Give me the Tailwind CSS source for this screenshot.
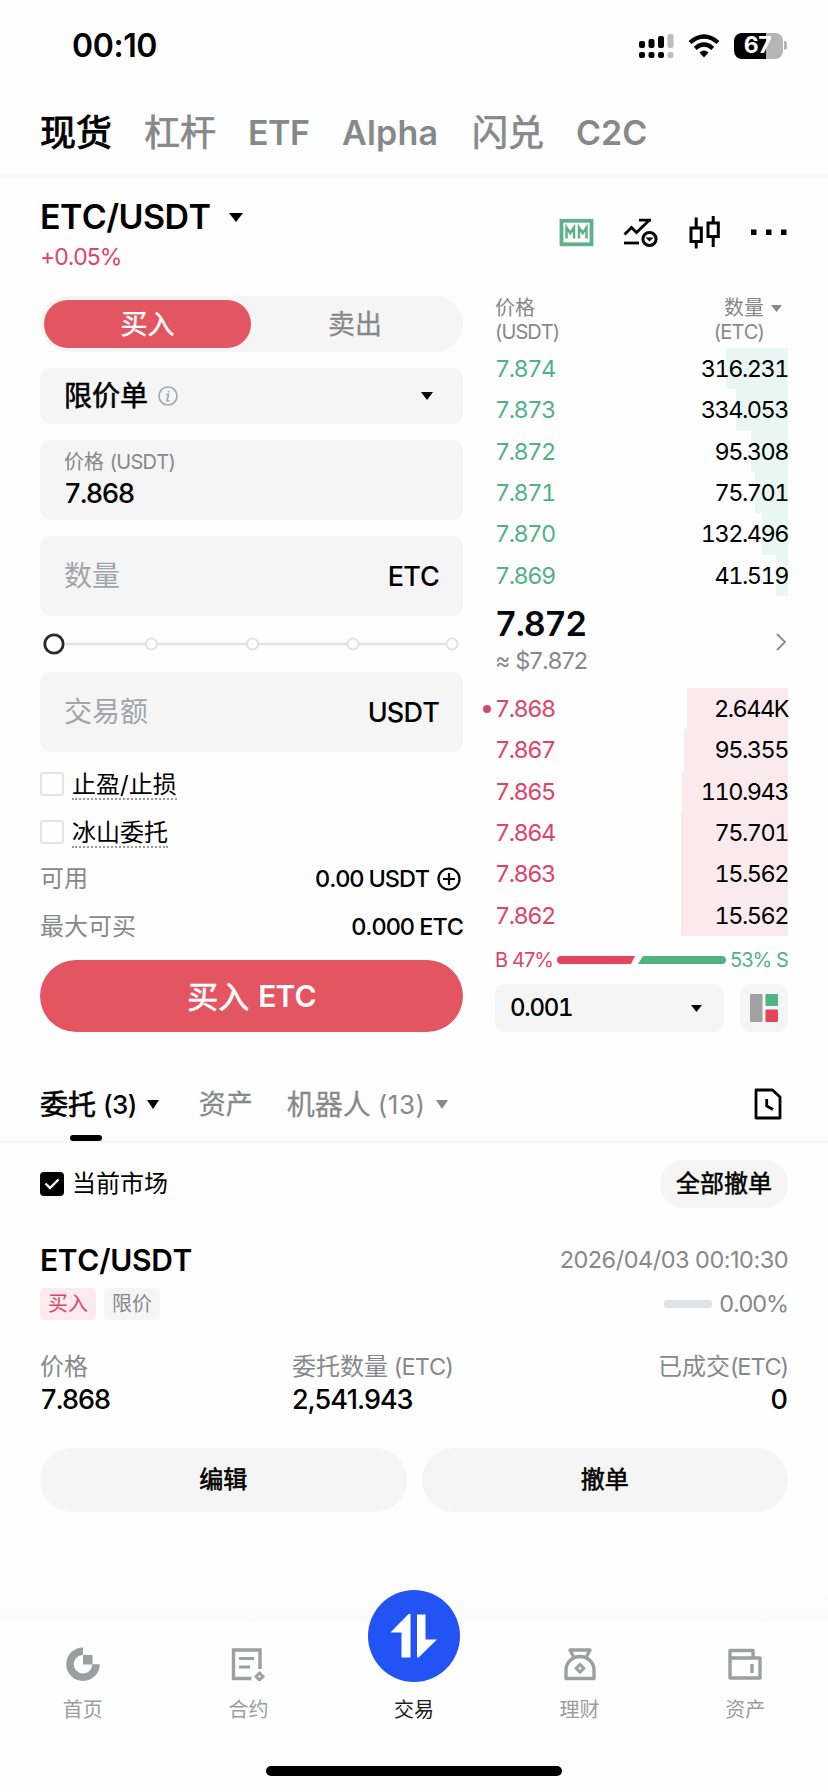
<!DOCTYPE html>
<html lang="zh-CN">
<head>
<meta charset="utf-8">
<title>ETC/USDT 现货交易</title>
<script src="https://cdn.jsdelivr.net/npm/@tailwindcss/browser@4"></script>
</head>
<body class="bg-white">
<div class="flex h-[1792px] w-[828px] flex-col overflow-hidden bg-[#fefefe] font-['Inter','Noto_Sans_CJK_SC',sans-serif] leading-none text-black [font-kerning:none]">

  <!-- status bar -->
  <div class="flex h-[90px] items-center justify-between pt-[1px] pr-[41px] pl-[72px]">
    <span class="text-[32px] font-semibold tracking-[-0.4px]">00:10</span>
    <div class="flex items-center gap-[14px]">
      <svg class="h-[26px] w-[35px]" viewBox="0 0 35 26">
        <g fill="#000"><rect x="0" y="8" width="6" height="7" rx="2"/><rect x="9.5" y="6" width="6" height="9" rx="2"/><rect x="19" y="3" width="6" height="12" rx="2"/><rect x="0" y="19" width="6" height="6" rx="2"/><rect x="9.5" y="19" width="6" height="6" rx="2"/><rect x="19" y="19" width="6" height="6" rx="2"/></g>
        <g fill="#bdbdbd"><rect x="28.500" y="1" width="6" height="14" rx="2"/><rect x="28.500" y="19" width="6" height="6" rx="2"/></g>
      </svg>
      <svg class="h-[24px] w-[32px]" viewBox="0 0 32 24" fill="none" stroke="#000" stroke-width="4.200">
        <path d="M2 8.500Q16 -3.500 30 8.500"/><path d="M7.200 14.300Q16 6.700 24.800 14.300"/>
        <path d="M11.500 18.500Q16 14.700 20.500 18.500L16 23.500Z" fill="#000" stroke="none"/>
      </svg>
      <div class="flex items-center gap-[1px]">
        <div class="flex h-[26px] w-[49px] items-center justify-center rounded-[8px] bg-[linear-gradient(90deg,#000_66%,#b5b5b5_66%)] pr-[2px] text-[23px] font-bold tracking-[-0.5px] text-white">67</div>
        <div class="h-[9px] w-[3px] rounded-r-full bg-[#b5b5b5]"></div>
      </div>
    </div>
  </div>

  <!-- market tabs -->
  <div class="flex h-[87px] items-center gap-[32px] border-b-2 border-[#f7f8f8] pl-[40px] text-[36px] text-[#86898a]">
    <span class="[-webkit-text-stroke:0.9px_#000] text-black">现货</span>
    <span class="[-webkit-text-stroke:0.7px_#86898a]">杠杆</span>
    <span class="w-[62px] text-[34px] font-semibold tracking-[-0.5px]">ETF</span>
    <span class="w-[98px] text-[34px] font-semibold tracking-[0.2px]">Alpha</span>
    <span class="[-webkit-text-stroke:0.7px_#86898a]">闪兑</span>
    <span class="text-[34px] font-semibold">C2C</span>
  </div>

  <!-- pair header -->
  <div class="flex h-[119px] items-start justify-between pr-[39px] pl-[40px]">
    <div class="flex flex-col pt-[23px]">
      <div class="flex items-center gap-[20px]">
        <span class="w-[169px] text-[34px] leading-[34px] font-semibold tracking-[-0.6px] whitespace-nowrap">ETC/USDT</span>
        <svg class="h-[9px] w-[14px]" viewBox="0 0 14 9"><path d="M0 0H14L7 9Z"/></svg>
      </div>
      <span class="mt-[11px] text-[23px] leading-[24px] tracking-[-1px] text-[#dc4468]">+0.05%</span>
    </div>
    <div class="flex items-center pt-[37px]">
      <svg class="h-[36px] w-[36px]" viewBox="0 0 36 36" fill="none" stroke="#5fb18c"><rect x="2.500" y="6.800" width="30" height="23.500" stroke-width="3.800"/><path d="M7.500 24.500V13.500L11.200 19L15 13.500V24.500M20 24.500V13.500L23.700 19L27.500 13.500V24.500" stroke-width="2.500"/></svg>
      <svg class="ml-[28px] h-[36px] w-[36px]" viewBox="0 0 36 36" fill="none" stroke="#000" stroke-width="2.800"><path d="M1.500 20.500L8.500 13.500L13.500 18.500L26 6.500M16 6.200H28"/><path d="M1 29H16"/><circle cx="26.500" cy="25" r="6.600" stroke-width="3"/><path d="M22.500 23.500H30.500L26.500 27.500Z" fill="#000" stroke="none"/></svg>
      <svg class="ml-[28px] h-[36px] w-[36px]" viewBox="0 0 36 36" fill="none" stroke="#000" stroke-width="3"><rect x="4" y="14" width="10.300" height="13.500"/><rect x="21" y="9" width="10.300" height="13.500"/><path d="M9.200 3.500V13M9.200 28V34.500M26.200 2V8M26.200 23V33"/></svg>
      <svg class="ml-[28px] h-[36px] w-[38px]" viewBox="0 0 38 36"><rect x="0" y="15.500" width="5.500" height="5.500"/><rect x="15" y="15.500" width="5.500" height="5.500"/><rect x="30" y="15.500" width="5.500" height="5.500"/></svg>
    </div>
  </div>

  <!-- trading area -->
  <div class="flex h-[736px] pr-[40px] pl-[40px]">
    <!-- order form -->
    <div class="flex w-[423px] flex-col">
      <div class="flex h-[56px] items-center rounded-full bg-[#f5f5f5] p-[4px] text-[27px]">
        <div class="flex h-[48px] w-[207px] items-center justify-center rounded-full bg-[#e35561] text-white [-webkit-text-stroke:0.4px_#fff]">买入</div>
        <div class="flex flex-1 items-center justify-center text-[#86898a] [-webkit-text-stroke:0.3px_#86898a]">卖出</div>
      </div>
      <div class="mt-[16px] flex h-[56px] items-center rounded-[10px] bg-[#f5f5f5] pr-[30px] pl-[24px]">
        <span class="text-[28px] [-webkit-text-stroke:0.6px_#000]">限价单</span>
        <svg class="ml-[10px] h-[20px] w-[20px]" viewBox="0 0 20 20" fill="none" stroke="#a2a5a8" stroke-width="1.600"><circle cx="10" cy="10" r="9"/><path d="M8.300 8.500H10.500L9 14.700H11.300M10.600 4.700V6.600"/></svg>
        <svg class="ml-auto h-[8px] w-[12px]" viewBox="0 0 12 8"><path d="M0 0H12L6 8Z"/></svg>
      </div>
      <div class="mt-[16px] flex h-[80px] flex-col rounded-[10px] bg-[#f5f5f5] pt-[12px] pl-[24px]">
        <span class="text-[20px] leading-[20px] text-[#86898a]">价格 <span class="tracking-[-0.7px]">(USDT)</span></span>
        <span class="mt-[8px] text-[27px] leading-[28px] font-medium tracking-[-1.5px] tabular-nums">7.868</span>
      </div>
      <div class="mt-[16px] flex h-[80px] items-center justify-between rounded-[10px] bg-[#f5f5f5] px-[24px]">
        <span class="text-[28px] text-[#a2a5a8]">数量</span>
        <span class="text-[27px] font-medium tracking-[-0.8px]">ETC</span>
      </div>
      <svg class="h-[56px] w-[423px]" viewBox="0 0 423 56" fill="none"><path d="M26 28H412" stroke="#e2e2e2" stroke-width="2.500"/><circle cx="14" cy="28" r="9.200" stroke="#2b2b2b" stroke-width="2.800" fill="#fefefe"/><g stroke="#e0e0e0" stroke-width="1.800" fill="#fefefe"><circle cx="111.500" cy="28" r="5.600"/><circle cx="212.500" cy="28" r="5.600"/><circle cx="313" cy="28" r="5.600"/><circle cx="412" cy="28" r="5.600"/></g></svg>
      <div class="flex h-[80px] items-center justify-between rounded-[10px] bg-[#f5f5f5] px-[24px]">
        <span class="text-[28px] text-[#a2a5a8]">交易额</span>
        <span class="text-[27px] font-medium tracking-[-0.8px]">USDT</span>
      </div>
      <div class="mt-[20px] flex h-[28px] items-start gap-[8px]">
        <div class="h-[24px] w-[24px] rounded-[3px] border-2 border-[#e4e4e4]"></div>
        <span class="border-b-2 border-dotted border-[#9a9a9a] text-[24px] leading-[26px]">止盈/止损</span>
      </div>
      <div class="mt-[20px] flex h-[28px] items-start gap-[8px]">
        <div class="h-[24px] w-[24px] rounded-[3px] border-2 border-[#e4e4e4]"></div>
        <span class="border-b-2 border-dotted border-[#9a9a9a] text-[24px] leading-[26px]">冰山委托</span>
      </div>
      <div class="mt-[19px] flex h-[24px] items-center">
        <span class="text-[24px] text-[#86898a]">可用</span>
        <span class="ml-auto text-[23.500px] font-medium tracking-[-1.1px]">0.00 USDT</span>
        <svg class="mr-[2px] ml-[8px] h-[24px] w-[24px]" viewBox="0 0 24 24" fill="none" stroke="#000" stroke-width="2.200"><circle cx="12" cy="12" r="10.500"/><path d="M6 12H18M12 6V18"/></svg>
      </div>
      <div class="mt-[24px] flex h-[24px] items-center justify-between">
        <span class="text-[24px] text-[#86898a]">最大可买</span>
        <span class="text-[23.500px] font-medium tracking-[-1px]">0.000 ETC</span>
      </div>
      <div class="mt-[21px] flex h-[72px] items-center justify-center gap-[9px] rounded-full bg-[#e35561] text-white">
        <span class="text-[31px] [-webkit-text-stroke:0.6px_#fff]">买入</span>
        <span class="text-[30px] font-semibold tracking-[-0.8px]">ETC</span>
      </div>
    </div>

    <!-- order book -->
    <div class="ml-[32px] flex w-[293px] flex-col">
      <div class="flex h-[52px] justify-between text-[20px] leading-[24px] text-[#86898a]">
        <div class="flex flex-col"><span>价格</span><span class="tracking-[-0.9px]">(USDT)</span></div>
        <div class="flex gap-[7px] pr-[6px]">
          <div class="flex flex-col items-end"><span>数量</span><span class="tracking-[-0.8px]">(ETC)</span></div>
          <svg class="mt-[9px] h-[7px] w-[11px]" viewBox="0 0 11 7"><path d="M0 0H11L5.500 7Z" fill="#86898a"/></svg>
        </div>
      </div>
      <div class="grid h-[248px] grid-rows-[41px_42px_41px_41px_42px_41px] text-[23.500px] tracking-[-1.5px] tabular-nums">
        <div class="flex items-center justify-between bg-[linear-gradient(#e8f7f1,#e8f7f1)] bg-right bg-no-repeat" style="background-size:62px 100%"><span class="text-[#52b188]">7.874</span><span>316.231</span></div>
        <div class="flex items-center justify-between bg-[linear-gradient(#e8f7f1,#e8f7f1)] bg-right bg-no-repeat" style="background-size:52px 100%"><span class="text-[#52b188]">7.873</span><span>334.053</span></div>
        <div class="flex items-center justify-between bg-[linear-gradient(#e8f7f1,#e8f7f1)] bg-right bg-no-repeat" style="background-size:37px 100%"><span class="text-[#52b188]">7.872</span><span>95.308</span></div>
        <div class="flex items-center justify-between bg-[linear-gradient(#e8f7f1,#e8f7f1)] bg-right bg-no-repeat" style="background-size:33px 100%"><span class="text-[#52b188]">7.871</span><span>75.701</span></div>
        <div class="flex items-center justify-between bg-[linear-gradient(#e8f7f1,#e8f7f1)] bg-right bg-no-repeat" style="background-size:26px 100%"><span class="text-[#52b188]">7.870</span><span>132.496</span></div>
        <div class="flex items-center justify-between bg-[linear-gradient(#e8f7f1,#e8f7f1)] bg-right bg-no-repeat" style="background-size:12px 100%"><span class="text-[#52b188]">7.869</span><span>41.519</span></div>
      </div>
      <div class="flex h-[92px] items-center justify-between pr-[2px]">
        <div class="-mt-[4px] flex flex-col">
          <span class="text-[34px] leading-[36px] font-semibold tracking-[-1.2px] text-[#06060f] tabular-nums">7.872</span>
          <span class="mt-[6px] text-[23.500px] leading-[26px] tracking-[-0.9px] text-[#86898a]">≈ $7.872</span>
        </div>
        <svg class="h-[18px] w-[10px]" viewBox="0 0 10 18" fill="none" stroke="#86898a" stroke-width="1.800"><path d="M1 1L9 9L1 17"/></svg>
      </div>
      <div class="grid h-[248px] grid-rows-[41px_42px_41px_41px_42px_41px] text-[23.500px] tracking-[-1.5px] tabular-nums">
        <div class="relative flex items-center justify-between bg-[linear-gradient(#faeaed,#faeaed)] bg-right bg-no-repeat" style="background-size:101px 100%"><i class="absolute left-[-12px] h-[8px] w-[8px] rounded-full bg-[#dc4468]"></i><span class="text-[#dc4468]">7.868</span><span>2.644K</span></div>
        <div class="flex items-center justify-between bg-[linear-gradient(#faeaed,#faeaed)] bg-right bg-no-repeat" style="background-size:104px 100%"><span class="text-[#dc4468]">7.867</span><span>95.355</span></div>
        <div class="flex items-center justify-between bg-[linear-gradient(#faeaed,#faeaed)] bg-right bg-no-repeat" style="background-size:106px 100%"><span class="text-[#dc4468]">7.865</span><span>110.943</span></div>
        <div class="flex items-center justify-between bg-[linear-gradient(#faeaed,#faeaed)] bg-right bg-no-repeat" style="background-size:107px 100%"><span class="text-[#dc4468]">7.864</span><span>75.701</span></div>
        <div class="flex items-center justify-between bg-[linear-gradient(#faeaed,#faeaed)] bg-right bg-no-repeat" style="background-size:107px 100%"><span class="text-[#dc4468]">7.863</span><span>15.562</span></div>
        <div class="flex items-center justify-between bg-[linear-gradient(#faeaed,#faeaed)] bg-right bg-no-repeat" style="background-size:107px 100%"><span class="text-[#dc4468]">7.862</span><span>15.562</span></div>
      </div>
      <div class="flex h-[48px] items-center justify-between text-[20px] tracking-[-0.9px]">
        <span class="text-[#dc4468]">B 47%</span>
        <svg class="h-[8px] w-[169px]" viewBox="0 0 169 8"><path d="M4 0H78L74 8H4A4 4 0 0 1 4 0Z" fill="#e2455c"/><path d="M86 0H165A4 4 0 0 1 165 8H81Z" fill="#52b382"/></svg>
        <span class="text-[#52b188]">53% S</span>
      </div>
      <div class="flex h-[48px] gap-[16px]">
        <div class="flex w-[229px] items-center justify-between rounded-[10px] bg-[#f5f5f5] pr-[22px] pl-[15px]">
          <span class="text-[24px] font-medium tracking-[-1.3px] tabular-nums">0.001</span>
          <svg class="h-[7px] w-[11px]" viewBox="0 0 11 7"><path d="M0 0H11L5.500 7Z"/></svg>
        </div>
        <div class="flex w-[48px] items-center justify-center rounded-[10px] bg-[#f5f5f5]">
          <svg class="h-[28px] w-[28px]" viewBox="0 0 28 28"><rect width="12.500" height="28" rx="1" fill="#9fa1a2"/><rect x="15.500" width="12.500" height="12" rx="1" fill="#52b382"/><rect x="15.500" y="15.500" width="12.500" height="12.500" rx="1" fill="#e2455c"/></svg>
        </div>
      </div>
    </div>
  </div>

  <!-- order tabs -->
  <div class="mt-[33px] flex h-[78px] border-b-2 border-[#f6f6f6] pr-[40px] pl-[40px] text-[#86898a]">
    <div class="flex flex-col">
      <div class="flex h-[70px] items-center pt-[9px]">
        <span class="text-[28px] text-black [-webkit-text-stroke:0.6px_#000]">委托</span>
        <span class="ml-[7px] text-[26px] font-medium tracking-[-0.6px] text-black">(3)</span>
        <svg class="ml-[10px] h-[9px] w-[12px]" viewBox="0 0 12 9"><path d="M0 0H12L6 9Z"/></svg>
      </div>
      <div class="ml-[30px] h-[6px] w-[32px] rounded-full bg-black"></div>
    </div>
    <div class="ml-[40px] flex h-[70px] items-center pt-[9px] text-[27px]">
      <span class="[-webkit-text-stroke:0.3px_#86898a]">资产</span>
      <span class="ml-[34px] text-[28px] [-webkit-text-stroke:0.3px_#86898a]">机器人</span>
      <span class="ml-[7px] text-[26px] tracking-[0.6px]">(13)</span>
      <svg class="ml-[10px] h-[9px] w-[12px]" viewBox="0 0 12 9"><path d="M0 0H12L6 9Z" fill="#86898a"/></svg>
    </div>
    <svg class="mt-[23px] mr-[6px] ml-auto h-[32px] w-[28px]" viewBox="0 0 28 32" fill="none" stroke="#000" stroke-width="2.800"><path d="M2 2H18.500L26 9V30H2Z" stroke-linejoin="round"/><path d="M12.700 11V18L19 21.500"/></svg>
  </div>

  <!-- filter row -->
  <div class="mt-[17px] flex h-[48px] items-center px-[40px]">
    <div class="flex h-[24px] w-[24px] items-center justify-center rounded-[4px] bg-black">
      <svg class="h-[24px] w-[24px]" viewBox="0 0 24 24" fill="none" stroke="#fff" stroke-width="2.400"><path d="M5.500 11.500L10 16L18.500 7.500"/></svg>
    </div>
    <span class="ml-[8px] text-[24px]">当前市场</span>
    <div class="ml-auto flex h-[48px] w-[128px] items-center justify-center rounded-full bg-[#f5f5f5] text-[24px] [-webkit-text-stroke:0.5px_#000]">全部撤单</div>
  </div>

  <!-- order card -->
  <div class="flex flex-col px-[40px] pt-[36px]">
    <div class="flex h-[32px] items-center justify-between">
      <span class="text-[30px] font-semibold tracking-[-0.3px]">ETC/USDT</span>
      <span class="text-[23.500px] tracking-[-0.5px] text-[#86898a]">2026/04/03 00:10:30</span>
    </div>
    <div class="mt-[12px] flex h-[32px] items-center text-[20px]">
      <span class="flex h-[32px] w-[56px] items-center justify-center rounded-[4px] bg-[#fcebee] text-[#dc4468]">买入</span>
      <span class="ml-[8px] flex h-[32px] w-[56px] items-center justify-center rounded-[4px] bg-[#f5f5f5] text-[#86898a]">限价</span>
      <i class="ml-auto h-[8px] w-[48px] rounded-[3px] bg-[#e1e3e4]"></i>
      <span class="ml-[7px] text-[23.500px] tracking-[-1.1px] text-[#86898a]">0.00%</span>
    </div>
    <div class="mt-[34px] grid grid-cols-[252px_300px_1fr]">
      <div class="flex flex-col"><span class="text-[24px] leading-[26px] text-[#86898a]">价格</span><span class="mt-[6px] text-[27px] leading-[28px] font-medium tracking-[-1.5px] tabular-nums">7.868</span></div>
      <div class="flex flex-col"><span class="text-[24px] leading-[26px] text-[#86898a]">委托数量 <span class="-ml-[1px] text-[23.500px] tracking-[-0.9px]">(ETC)</span></span><span class="mt-[6px] text-[27px] leading-[28px] font-medium tracking-[-1.1px]">2,541.943</span></div>
      <div class="flex flex-col items-end"><span class="text-[24px] leading-[26px] text-[#86898a]">已成交<span class="text-[23.500px] tracking-[-1.1px]">(ETC)</span></span><span class="mt-[6px] text-[27px] leading-[28px] font-medium">0</span></div>
    </div>
    <div class="mt-[34px] grid h-[64px] grid-cols-2 gap-[15px] text-[24px] [-webkit-text-stroke:0.6px_#000]">
      <div class="flex items-center justify-center rounded-full bg-[#f5f5f5]">编辑</div>
      <div class="flex items-center justify-center rounded-full bg-[#f5f5f5]">撤单</div>
    </div>
  </div>

  <!-- bottom navigation -->
  <div class="mt-[78px] flex h-[78px] flex-1 flex-col">
    <div class="h-[33px] bg-linear-to-b from-transparent to-[#fafafa]"></div>
    <div class="-mt-[33px] grid h-[150px] grid-cols-5 px-0 text-[20px] text-[#9b9d9f]">
      <div class="flex flex-col items-center pt-[57px]">
        <svg class="h-[34px] w-[34px]" viewBox="0 0 34 34"><path d="M17 4.200A13 13 0 1 0 30 17.200" fill="none" stroke="#9c9e9f" stroke-width="7.500"/><rect x="17" y="8" width="9.500" height="9.500" fill="#9c9e9f"/></svg>
        <span class="mt-[19px]">首页</span>
      </div>
      <div class="flex flex-col items-center pt-[57px]">
        <svg class="h-[34px] w-[34px]" viewBox="0 0 34 34" fill="none" stroke="#9c9e9f" stroke-width="3.400"><path d="M20.500 31.500H2.500V3H29V22"/><path d="M8 11.500H23M8 20H19" stroke-width="3"/><path d="M28.500 26L32 29.500L28.500 33L25 29.500Z" stroke-width="3"/></svg>
        <span class="mt-[19px]">合约</span>
      </div>
      <div class="flex flex-col items-center">
        <div class="flex h-[92px] w-[92px] items-center justify-center rounded-full bg-[#2153f5]">
          <svg class="h-[44px] w-[48px]" viewBox="0 0 48 44" fill="#fff"><path d="M20.500 0V43.500H11.500V18.500H0.500L18.500 0Z"/><path d="M27 43.500V0.500H35.500V25.500H47L28.500 43.500Z"/></svg>
        </div>
        <span class="mt-[18px] text-[#1c1d1f]">交易</span>
      </div>
      <div class="flex flex-col items-center pt-[57px]">
        <svg class="h-[34px] w-[34px]" viewBox="0 0 34 34" fill="none" stroke="#9c9e9f" stroke-width="3.400"><path d="M10.500 9.500L7 3H27L23.500 9.500" stroke-linejoin="round"/><path d="M3 31.500V23A14 13.500 0 0 1 31 23V31.500Z" stroke-linejoin="round"/><path d="M17 17.500L20.800 21.300L17 25.100L13.200 21.300Z" stroke-width="3"/></svg>
        <span class="mt-[19px]">理财</span>
      </div>
      <div class="flex flex-col items-center pt-[57px]">
        <svg class="h-[34px] w-[34px]" viewBox="0 0 34 34" fill="none" stroke="#9c9e9f" stroke-width="3.400" stroke-linejoin="round"><path d="M2 31V3.500H25V10M2 11H32V31H2Z"/><path d="M24 17V26"/></svg>
        <span class="mt-[19px]">资产</span>
      </div>
    </div>
    <div class="mx-auto mt-[26px] h-[10px] w-[296px] rounded-full bg-black"></div>
  </div>
</div>
</body>
</html>
